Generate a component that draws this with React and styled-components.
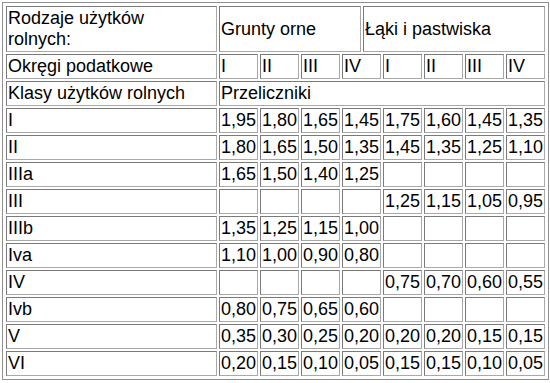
import React from "react";
import styled, { createGlobalStyle } from "styled-components";

const Global = createGlobalStyle`
  html, body { margin: 0; padding: 0; background: #ffffff; }
  body { font-family: "Liberation Sans", Arial, Helvetica, sans-serif; color: #000; }
`;

const Page = styled.div`
  padding: 2px;
`;

const Table = styled.table`
  width: 547px;
  table-layout: fixed;
  border-collapse: separate;
  border-spacing: 2px;
  border: 1px solid #8f8f8f;
  padding: 1px;
  font-size: 18px;
  line-height: 21px;
  empty-cells: show;
`;

const Col = styled.col`
  width: ${(p) => p.$w}px;
`;

const Cell = styled.td`
  border: 1px solid #8a8a8a;
  border-top-color: #7a7a7a;
  border-left-color: #7a7a7a;
  border-bottom-color: #a8a8a8;
  border-right-color: #a8a8a8;
  padding: 1px;
  vertical-align: middle;
  text-align: left;
  white-space: nowrap;
  overflow: hidden;
`;

const colWidths = [211, 39, 39, 39, 19, 18, 39, 39, 39, 39];

const districts = ["I", "II", "III", "IV", "I", "II", "III", "IV"];

const rows = [
  ["I", ["1,95", "1,80", "1,65", "1,45", "1,75", "1,60", "1,45", "1,35"]],
  ["II", ["1,80", "1,65", "1,50", "1,35", "1,45", "1,35", "1,25", "1,10"]],
  ["IIIa", ["1,65", "1,50", "1,40", "1,25", "", "", "", ""]],
  ["III", ["", "", "", "", "1,25", "1,15", "1,05", "0,95"]],
  ["IIIb", ["1,35", "1,25", "1,15", "1,00", "", "", "", ""]],
  ["Iva", ["1,10", "1,00", "0,90", "0,80", "", "", "", ""]],
  ["IV", ["", "", "", "", "0,75", "0,70", "0,60", "0,55"]],
  ["Ivb", ["0,80", "0,75", "0,65", "0,60", "", "", "", ""]],
  ["V", ["0,35", "0,30", "0,25", "0,20", "0,20", "0,20", "0,15", "0,15"]],
  ["VI", ["0,20", "0,15", "0,10", "0,05", "0,15", "0,15", "0,10", "0,05"]],
];

const spanOf = (i) => (i === 3 ? 2 : 1);

export default function App() {
  return (
    <Page>
      <Global />
      <Table>
        <colgroup>
          {colWidths.map((w, i) => (
            <Col key={i} $w={w} />
          ))}
        </colgroup>
        <tbody>
          <tr>
            <Cell>
              Rodzaje użytków
              <br />
              rolnych:
            </Cell>
            <Cell colSpan={4}>Grunty orne</Cell>
            <Cell colSpan={5}>Łąki i pastwiska</Cell>
          </tr>
          <tr>
            <Cell>Okręgi podatkowe</Cell>
            {districts.map((d, i) => (
              <Cell key={i} colSpan={spanOf(i)}>
                {d}
              </Cell>
            ))}
          </tr>
          <tr>
            <Cell>Klasy użytków rolnych</Cell>
            <Cell colSpan={9}>Przeliczniki</Cell>
          </tr>
          {rows.map(([label, vals]) => (
            <tr key={label}>
              <Cell>{label}</Cell>
              {vals.map((v, i) => (
                <Cell key={i} colSpan={spanOf(i)}>
                  {v || "\u00a0"}
                </Cell>
              ))}
            </tr>
          ))}
        </tbody>
      </Table>
    </Page>
  );
}
